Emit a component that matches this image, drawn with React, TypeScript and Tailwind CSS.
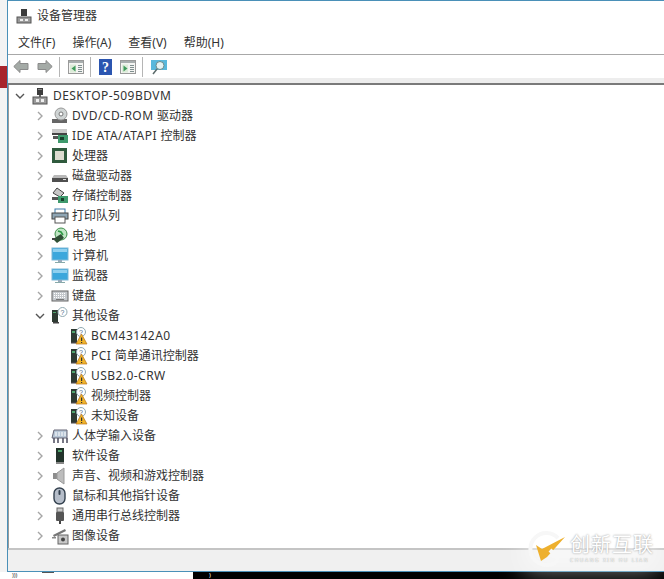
import type { ReactNode } from 'react';

const font = { fontFamily: '"Noto Sans", "Noto Sans CJK SC", sans-serif' };

function Svg({ children }: { children: ReactNode }) {
  return (
    <svg width="18" height="18" viewBox="0 0 18 18" className="shrink-0">
      {children}
    </svg>
  );
}

function Chevron({ open }: { open?: boolean }) {
  return (
    <svg width="10" height="10" viewBox="0 0 10 10" className="shrink-0">
      {open ? (
        <path d="M1 3l4 4 4-4" fill="none" stroke="#555" strokeWidth="1.4" />
      ) : (
        <path d="M3 1l4 4-4 4" fill="none" stroke="#a6a6a6" strokeWidth="1.4" />
      )}
    </svg>
  );
}

// latin runs are a bit wider in the screenshot than in Noto Sans
function Label({ text }: { text: string }) {
  return (
    <span className="whitespace-nowrap">
      {text.split(/([\x20-\x7e]+)/).map((part, i) =>
        /[\x20-\x7e]/.test(part) ? (
          <span key={i} className="tracking-[0.45px]">{part}</span>
        ) : (
          <span key={i}>{part}</span>
        )
      )}
    </span>
  );
}

const PcIcon = () => (
  <Svg>
    <rect x="6" y="1" width="6" height="7" fill="#3c3c3c" />
    <rect x="7" y="2" width="4" height="1" fill="#888" />
    <rect x="8" y="8" width="2" height="2" fill="#666" />
    <rect x="2" y="10" width="14" height="7" fill="#9a9a9a" stroke="#555" />
    <rect x="5" y="12" width="3" height="3" fill="#eee" />
    <rect x="10" y="12" width="3" height="3" fill="#eee" />
  </Svg>
);

const DvdIcon = () => (
  <Svg>
    <rect x="1" y="12" width="15" height="4" fill="#666" />
    <circle cx="10" cy="7" r="6" fill="#cfd4d4" stroke="#999" />
    <circle cx="10" cy="7" r="2" fill="#fff" stroke="#777" />
  </Svg>
);

const IdeIcon = () => (
  <Svg>
    <rect x="1" y="2" width="15" height="4" fill="#c9c9c9" />
    <rect x="1" y="6" width="15" height="2" fill="#444" />
    <rect x="7" y="8" width="10" height="8" fill="#3f9a6d" />
    <rect x="9" y="10" width="4" height="3" fill="#17402c" />
    <rect x="2" y="9" width="5" height="3" fill="#555" />
  </Svg>
);

const CpuIcon = () => (
  <Svg>
    <rect x="1" y="1" width="15" height="15" fill="#2f5a3d" />
    <rect x="4" y="4" width="9" height="9" fill="#dcdcd0" />
  </Svg>
);

const DiskIcon = () => (
  <Svg>
    <path d="M3 8h12l2 3v3H1v-3z" fill="#b9b9b9" />
    <rect x="1" y="11" width="16" height="4" fill="#4f4f4f" />
    <rect x="12" y="12" width="3" height="1" fill="#ddd" />
  </Svg>
);

const StorageIcon = () => (
  <Svg>
    <path d="M6 1l7 5-4 4-7-4z" fill="#c7c7c7" stroke="#444" />
    <rect x="1" y="10" width="7" height="3" fill="#555" />
    <rect x="7" y="9" width="10" height="7" fill="#3f9a6d" />
    <rect x="10" y="11" width="3" height="3" fill="#17402c" />
  </Svg>
);

const PrinterIcon = () => (
  <Svg>
    <rect x="4" y="2" width="10" height="5" fill="#fff" stroke="#3a78a8" />
    <rect x="1" y="6" width="16" height="6" fill="#8fa6b5" stroke="#444" />
    <rect x="4" y="10" width="10" height="6" fill="#fff" stroke="#555" />
  </Svg>
);

const BatteryIcon = () => (
  <Svg>
    <circle cx="10" cy="7" r="6" fill="#bfe6c4" stroke="#3f8f4c" />
    <path d="M2 12l8-5 3 4-7 5z" fill="#2f4f35" />
    <path d="M7 4l3 1 2 3" stroke="#2f9a46" strokeWidth="1.6" fill="none" />
    <rect x="1" y="11" width="3" height="2" fill="#444" />
  </Svg>
);

const MonitorIcon = ({ low }: { low?: boolean }) => (
  <Svg>
    <rect x="1" y={low ? 2 : 1} width="16" height={low ? 11 : 12} fill="#3ba7dc" stroke="#7fb8d6" />
    <rect x="2" y={low ? 3 : 2} width="14" height="3" fill="#8ed0ef" />
    <rect x="7" y="13" width="4" height="2" fill="#9ab" />
    <rect x="4" y="15" width="10" height="1" fill="#8aa" />
  </Svg>
);

const KeyboardIcon = () => (
  <Svg>
    <rect x="1" y="4" width="16" height="10" fill="#c4c8cc" stroke="#666" />
    <path d="M3 6.5h12M3 8.5h12M3 10.5h12" stroke="#fff" strokeDasharray="1 1" />
    <rect x="5" y="12" width="8" height="1" fill="#777" />
  </Svg>
);

const OtherIcon = () => (
  <Svg>
    <rect x="1" y="3" width="6" height="12" fill="#2e3a32" />
    <rect x="2" y="5" width="3" height="1" fill="#4fa36c" />
    <rect x="2" y="15" width="6" height="1.5" fill="#444" />
    <circle cx="11.5" cy="5" r="4.5" fill="#fff" stroke="#8fa8b0" />
    <text x="11.5" y="7.5" fontSize="7" textAnchor="middle" fill="#4a6a86" fontFamily="Liberation Sans">?</text>
  </Svg>
);

const WarnIcon = () => (
  <Svg>
    <rect x="1" y="2" width="6" height="13" fill="#2e3a32" />
    <rect x="2" y="4" width="3" height="2" fill="#4fa36c" />
    <rect x="1" y="15" width="7" height="1.5" fill="#444" />
    <circle cx="11" cy="5" r="4.5" fill="#fff" stroke="#8fa8b0" />
    <text x="11" y="7.5" fontSize="7" textAnchor="middle" fill="#4a6a86" fontFamily="Liberation Sans">?</text>
    <path d="M11.5 7l5.5 10H6z" fill="#f0b429" stroke="#b8741a" strokeWidth=".7" />
    <rect x="11" y="10.5" width="1.2" height="3.5" fill="#333" />
    <rect x="11" y="15" width="1.2" height="1" fill="#333" />
  </Svg>
);

const HidIcon = () => (
  <Svg>
    <path d="M3 3h13v8H1z" fill="#b7c6d6" stroke="#667" />
    <path d="M5 5v4M8 5v4M11 5v4M14 5v4" stroke="#fff" />
    <path d="M3 11v5M7 11v5M12 11v5M16 11v5" stroke="#556" strokeWidth="1.6" />
  </Svg>
);

const SoftwareIcon = () => (
  <Svg>
    <rect x="5" y="1" width="8" height="14" fill="#22332a" />
    <rect x="7" y="3" width="4" height="2" fill="#4fa36c" />
    <rect x="5" y="15" width="8" height="2" fill="#888" />
  </Svg>
);

const SoundIcon = () => (
  <Svg>
    <rect x="2" y="6" width="4" height="6" fill="#8d8d8d" />
    <path d="M6 6l7-5v16l-7-5z" fill="#bdbdbd" stroke="#999" />
  </Svg>
);

const MouseIcon = () => (
  <Svg>
    <rect x="3" y="1" width="11" height="16" rx="5.5" fill="#b5bdc9" stroke="#33404e" strokeWidth="1.4" />
    <rect x="7.5" y="3" width="2" height="5" rx="1" fill="#33404e" />
  </Svg>
);

const UsbIcon = () => (
  <Svg>
    <rect x="6" y="1" width="6" height="4" fill="#c9c9c9" stroke="#666" />
    <rect x="5" y="5" width="8" height="9" rx="1" fill="#555" />
    <rect x="8" y="14" width="2" height="3" fill="#444" />
  </Svg>
);

const CameraIcon = () => (
  <Svg>
    <path d="M2 8L14 2l1 2L3 10z" fill="#777" />
    <rect x="1" y="10" width="4" height="1.5" fill="#888" />
    <rect x="7" y="8" width="10" height="9" fill="#c8c8c8" stroke="#666" />
    <circle cx="12" cy="12.5" r="2" fill="#444" />
  </Svg>
);

const rows: { label: string; icon: ReactNode; open?: boolean; child?: boolean }[] = [
  { label: 'DVD/CD-ROM 驱动器', icon: <DvdIcon /> },
  { label: 'IDE ATA/ATAPI 控制器', icon: <IdeIcon /> },
  { label: '处理器', icon: <CpuIcon /> },
  { label: '磁盘驱动器', icon: <DiskIcon /> },
  { label: '存储控制器', icon: <StorageIcon /> },
  { label: '打印队列', icon: <PrinterIcon /> },
  { label: '电池', icon: <BatteryIcon /> },
  { label: '计算机', icon: <MonitorIcon /> },
  { label: '监视器', icon: <MonitorIcon low /> },
  { label: '键盘', icon: <KeyboardIcon /> },
  { label: '其他设备', icon: <OtherIcon />, open: true },
  { label: 'BCM43142A0', icon: <WarnIcon />, child: true },
  { label: 'PCI 简单通讯控制器', icon: <WarnIcon />, child: true },
  { label: 'USB2.0-CRW', icon: <WarnIcon />, child: true },
  { label: '视频控制器', icon: <WarnIcon />, child: true },
  { label: '未知设备', icon: <WarnIcon />, child: true },
  { label: '人体学输入设备', icon: <HidIcon /> },
  { label: '软件设备', icon: <SoftwareIcon /> },
  { label: '声音、视频和游戏控制器', icon: <SoundIcon /> },
  { label: '鼠标和其他指针设备', icon: <MouseIcon /> },
  { label: '通用串行总线控制器', icon: <UsbIcon /> },
  { label: '图像设备', icon: <CameraIcon /> },
];

const menus = ['文件(F)', '操作(A)', '查看(V)', '帮助(H)'];

const Arrow = ({ flip, className }: { flip?: boolean; className?: string }) => (
  <svg width="16" height="15" viewBox="0 0 16 15" className={`shrink-0 ${flip ? '-scale-x-100' : ''} ${className ?? ''}`}>
    <path d="M.8 7.5L7 1.5v3h8v6H7v3z" fill="#a4aaa6" stroke="#8a8a8a" />
  </svg>
);

const Sep = ({ className }: { className: string }) => (
  <div className={`h-[20px] w-px shrink-0 bg-[#b5b5b5] ${className}`} />
);

const PanelIcon = ({ right, className }: { right?: boolean; className: string }) => (
  <svg width="16" height="14" viewBox="0 0 16 14" className={`shrink-0 ${className}`}>
    <rect x=".5" y=".5" width="15" height="13" fill="#f4f4f2" stroke="#9a9a9a" />
    <rect x="1" y="1" width="14" height="2" fill="#a8aeae" />
    <rect x="2" y="4.5" width="6" height="8" fill="#dcebd8" />
    <path d={right ? 'M3.5 5.5v6l4-3z' : 'M7.5 5.5v6l-4-3z'} fill="#3f9a5b" />
    <path d="M10 5.5h4M10 7.5h4M10 9.5h4M10 11.5h4" stroke="#7f8f8f" />
  </svg>
);

export default function App() {
  return (
    <div className="relative h-[579px] w-[664px] overflow-hidden bg-white text-[12px] text-[#333]" style={font}>
      <div className="flex h-[572px]">
        {/* background window peeking out on the left */}
        <div className="flex w-[7px] shrink-0 flex-col bg-[#f3f3f3]">
          <div className="h-[66px]" />
          <div className="h-[22px] bg-[#a8252c]" />
        </div>

        <div className="flex min-w-0 flex-1 flex-col border border-r-0 border-[#4a90b8] bg-white">
          <div className="flex h-[30px] shrink-0 items-center gap-[5px] pl-[8px]">
            <svg width="16" height="16" viewBox="0 0 16 16">
              <rect x="5" y="1" width="6" height="7" fill="#3c3c3c" />
              <rect x="1" y="9" width="14" height="6" fill="#9a9a9a" stroke="#555" />
              <rect x="4" y="11" width="3" height="2" fill="#eee" />
              <rect x="9" y="11" width="3" height="2" fill="#eee" />
            </svg>
            <span>设备管理器</span>
          </div>

          <div className="flex h-[24px] shrink-0 items-center gap-[17px] border-b border-[#a8a8a8] pl-[10px]">
            {menus.map((m) => (
              <span key={m}>{m}</span>
            ))}
          </div>

          <div className="flex h-[23px] shrink-0 items-center pl-[5px]">
            <Arrow />
            <Arrow flip className="ml-2" />
            <Sep className="ml-[6px]" />
            <PanelIcon className="ml-2" />
            <Sep className="ml-[6px]" />
            <svg width="13" height="16" viewBox="0 0 13 16" className="ml-[8px] shrink-0">
              <rect width="13" height="16" fill="#2b55b0" />
              <text x="6.5" y="13" textAnchor="middle" fontSize="14" fontWeight="700" fill="#fff" fontFamily="Liberation Serif">?</text>
            </svg>
            <PanelIcon right className="ml-[8px]" />
            <Sep className="ml-[6px]" />
            <svg width="18" height="16" viewBox="0 0 18 16" className="ml-[7px] shrink-0">
              <rect x="1" y="1" width="16" height="10" fill="#58b8dc" />
              <circle cx="10" cy="6.5" r="4" fill="#e4f3f4" stroke="#6a8a8a" />
              <path d="M7 10l-4 5" stroke="#5a6a6a" strokeWidth="1.5" />
            </svg>
          </div>

          <div className="h-[7px] shrink-0 border-b-2 border-[#7a7a7a] bg-[#ededed]" />

          <div className="min-h-0 flex-1 overflow-hidden border-l border-[#9a9a9a] pl-[3px] pt-[1px]">
            <div className="flex h-5 items-center">
              <div className="flex w-[15px] justify-center"><Chevron open /></div>
              <div className="ml-1 flex w-[22px] items-center"><PcIcon /></div>
              <Label text="DESKTOP-509BDVM" />
            </div>
            {rows.map((r) => (
              <div key={r.label} className={r.child ? 'flex h-5 items-center pl-[58px]' : 'flex h-5 items-center pl-[20px]'}>
                {!r.child && (
                  <div className="flex w-[15px] justify-center"><Chevron open={r.open} /></div>
                )}
                <div className={r.child ? 'flex w-[21px] items-center' : 'ml-[4px] flex w-[21px] items-center'}>{r.icon}</div>
                <Label text={r.label} />
              </div>
            ))}
          </div>

          <div className="h-[23px] shrink-0 border-t-2 border-[#c4c4c4] bg-[#f0f0f0]" />
        </div>
      </div>

      {/* strip of the window behind, below the dialog */}
      <div className="flex h-[7px] overflow-hidden">
        <div className="relative w-[193px] bg-white pl-3 text-[6px] leading-[7px]">
          )))
          <div className="absolute left-[42px] top-0 h-px w-3 bg-[#555]" />
        </div>
        <div className="flex-1 bg-black pl-[16px] text-[6px] leading-[7px] text-white">)</div>
      </div>

      {/* watermark */}
      <div className="absolute left-[528px] top-[531px] flex h-[36px] items-start">
        <div className="absolute -inset-1 bg-white/50 blur-md" />
        <svg width="38" height="36" viewBox="0 0 38 36" className="relative shrink-0">
          <path d="M30 7a16 16 0 1 0 0 22" fill="none" stroke="#f7f7f7" strokeWidth="4" />
          <path d="M8 14l6 4 0 0L37 6 19 26l-6 4z" fill="#eeb02e" />
          <path d="M22 19l9 9" stroke="#f7f7f7" strokeWidth="4" />
        </svg>
        <div className="relative ml-[4px] flex flex-col">
          <span className="text-[20px] leading-[26px] tracking-[1px] text-white [text-shadow:0_0_2px_#8a8a8a]" style={{ fontFamily: '"Noto Sans CJK SC", sans-serif' }}>创新互联</span>
          <span className="whitespace-nowrap text-[5px] leading-[6px] tracking-[1.5px] text-white [text-shadow:0_0_1px_#777]">CHUANG XIN HU LIAN</span>
        </div>
      </div>
    </div>
  );
}
